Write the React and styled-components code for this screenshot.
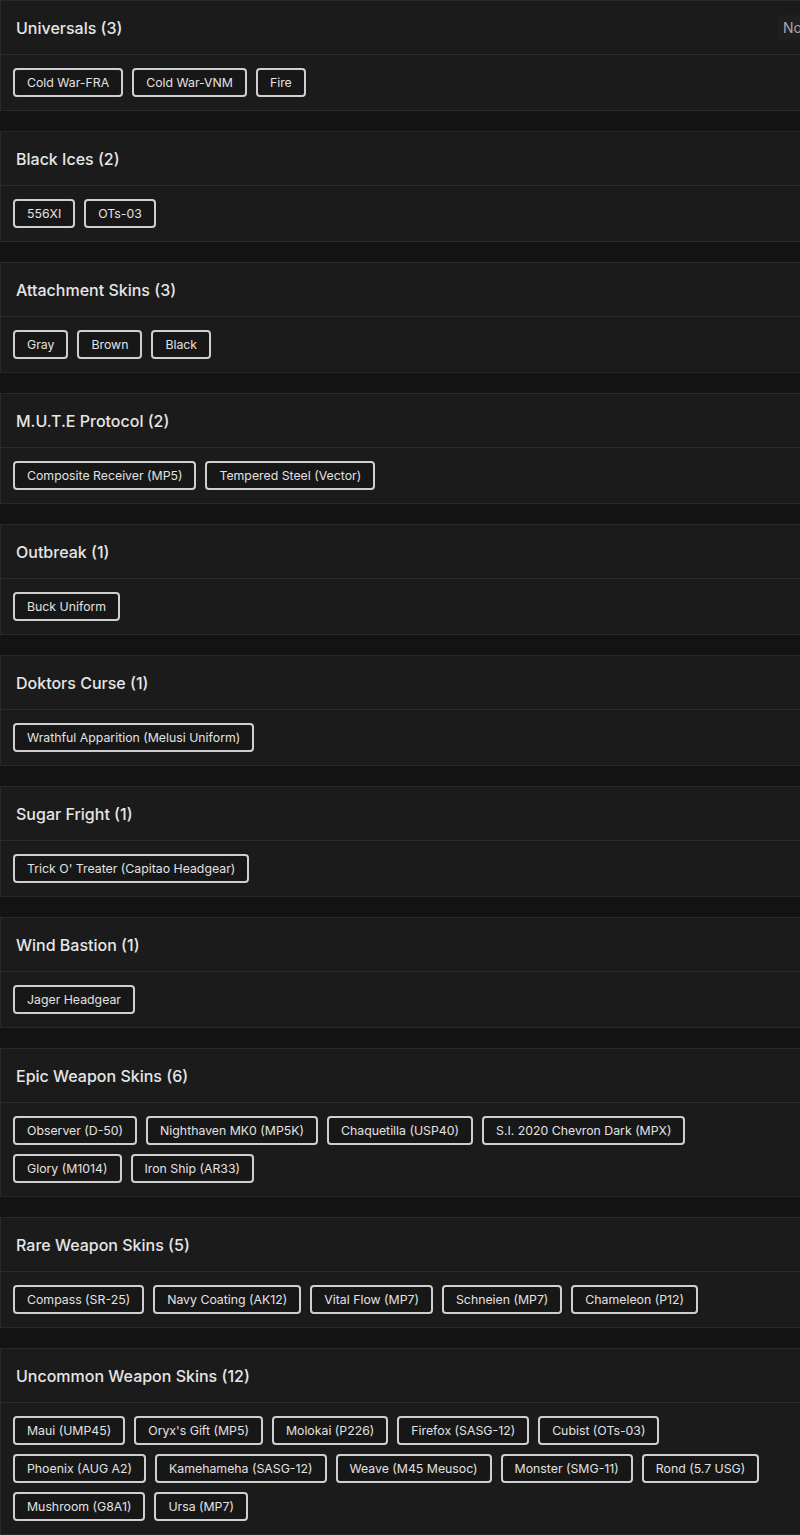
import React from 'react';
import styled, { createGlobalStyle } from 'styled-components';

const GlobalStyle = createGlobalStyle`
  html, body {
    margin: 0;
    padding: 0;
    background: #131313;
    overflow-x: hidden;
  }
  body {
    font-family: Inter, 'Open Sans', sans-serif;
  }
`;

const sections = [
  { title: 'Universals', note: 'Not Owned', items: ['Cold War-FRA', 'Cold War-VNM', 'Fire'] },
  { title: 'Black Ices', items: ['556XI', 'OTs-03'] },
  { title: 'Attachment Skins', items: ['Gray', 'Brown', 'Black'] },
  { title: 'M.U.T.E Protocol', items: ['Composite Receiver (MP5)', 'Tempered Steel (Vector)'] },
  { title: 'Outbreak', items: ['Buck Uniform'] },
  { title: 'Doktors Curse', items: ['Wrathful Apparition (Melusi Uniform)'] },
  { title: 'Sugar Fright', items: ["Trick O' Treater (Capitao Headgear)"] },
  { title: 'Wind Bastion', items: ['Jager Headgear'] },
  {
    title: 'Epic Weapon Skins',
    items: [
      'Observer (D-50)',
      'Nighthaven MK0 (MP5K)',
      'Chaquetilla (USP40)',
      'S.I. 2020 Chevron Dark (MPX)',
      'Glory (M1014)',
      'Iron Ship (AR33)',
    ],
  },
  {
    title: 'Rare Weapon Skins',
    items: ['Compass (SR-25)', 'Navy Coating (AK12)', 'Vital Flow (MP7)', 'Schneien (MP7)', 'Chameleon (P12)'],
  },
  {
    title: 'Uncommon Weapon Skins',
    items: [
      'Maui (UMP45)',
      "Oryx's Gift (MP5)",
      'Molokai (P226)',
      'Firefox (SASG-12)',
      'Cubist (OTs-03)',
      'Phoenix (AUG A2)',
      'Kamehameha (SASG-12)',
      'Weave (M45 Meusoc)',
      'Monster (SMG-11)',
      'Rond (5.7 USG)',
      'Mushroom (G8A1)',
      'Ursa (MP7)',
    ],
  },
];

export default function App() {
  return (
    <>
      <GlobalStyle />
      <Page>
        {sections.map((s) => (
          <Card key={s.title}>
            <Header>
              <Title>
                {s.title} ({s.items.length})
              </Title>
              {s.note && <Note>{s.note}</Note>}
            </Header>
            <Body>
              {s.items.map((item) => (
                <Chip key={item}>{item}</Chip>
              ))}
            </Body>
          </Card>
        ))}
      </Page>
    </>
  );
}

const Page = styled.div`
  width: 100%;
`;

const Card = styled.section`
  width: 880px;
  margin-bottom: 20px;
  background: #1b1b1b;
  border: 1px solid #292929;
  box-sizing: border-box;
`;

const Header = styled.div`
  height: 54px;
  box-sizing: border-box;
  border-bottom: 1px solid #2c2c2c;
  display: flex;
  align-items: center;
  padding-left: 15px;
`;

const Title = styled.h3`
  margin: 0;
  font-size: 16px;
  font-weight: 500;
  color: #e6e6e6;
`;

const Note = styled.span`
  margin-left: auto;
  width: 96px;
  padding: 4px 0 4px 5px;
  background: #1f1f21;
  font-size: 14px;
  color: #a8a8a8;
`;

const Body = styled.div`
  max-width: 782px;
  box-sizing: border-box;
  display: flex;
  flex-wrap: wrap;
  gap: 9px;
  padding: 13px 12px;
`;

const Chip = styled.span`
  display: inline-flex;
  align-items: center;
  height: 29px;
  box-sizing: border-box;
  padding: 0 12px;
  border: 2px solid #cfcfcf;
  border-radius: 4px;
  background: #171717;
  color: #e2e2e2;
  font-size: 12.3px;
  white-space: nowrap;
`;
